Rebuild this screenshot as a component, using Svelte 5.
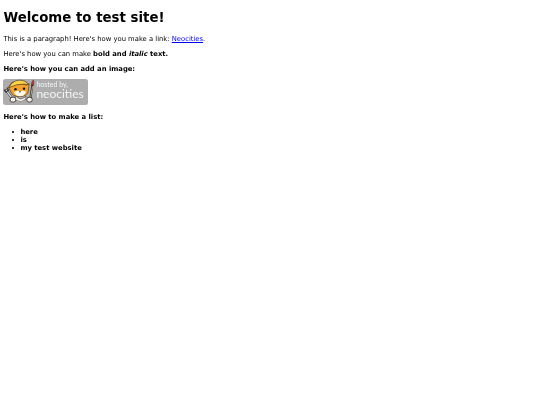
<script>
	const items = ['here', 'is', 'my test website'];
</script>

<main class="page">
	<h1>Welcome to test site!</h1>

	<p>This is a paragraph! Here's how you make a link: <a href="https://neocities.org">Neocities</a>.</p>

	<p>Here's how you can make <strong>bold and <em>italic</em> text.</strong></p>

	<p><strong>Here's how you can add an image:</strong></p>

	<p>
		<span class="badge">
			<svg class="mascot" viewBox="0 0 32 25" aria-hidden="true">
				<!-- wrench -->
				<path d="M3 11 L9 19" stroke="#333" stroke-width="2.4" stroke-linecap="round" />
				<path d="M3 11 L9 19" stroke="#e8e8e8" stroke-width="1.2" stroke-linecap="round" />
				<path d="M1 10.5 L3 13 L5.5 11 L4 8.5" fill="none" stroke="#333" stroke-width="1.1" />
				<!-- paw -->
				<ellipse cx="10" cy="20.5" rx="3" ry="2.6" fill="#f5f1e6" stroke="#222" stroke-width="0.8" />
				<!-- body -->
				<path d="M12 16 Q17 23 23 17 L22 21 Q17 24 13 21 Z" fill="#f5f1e6" stroke="#333" stroke-width="0.5" />
				<!-- head -->
				<path d="M5.5 8 L9 3 L13 5 Q19 3 23 6 L26 4.5 L25.5 11 Q25 17 17 17.5 Q9 17.5 7.5 12 Z" fill="#f4a32e" stroke="#3a2a14" stroke-width="0.6" stroke-linejoin="round" />
				<!-- hard hat -->
				<path d="M6 8.5 Q9 1.5 16 1 Q23 1 25.5 5.5 L21 5 Q14 4.5 6 8.5 Z" fill="#fcd24c" stroke="#3a2a14" stroke-width="0.6" stroke-linejoin="round" />
				<!-- muzzle and face -->
				<path d="M11 13 Q15 10.5 17 12.5 Q19 10.5 23 12.5 Q21.5 17 17 17 Q12.5 17 11 13 Z" fill="#fff8e8" />
				<circle cx="12.5" cy="10" r="1.2" fill="#111" />
				<circle cx="21" cy="9.5" r="1.2" fill="#111" />
				<path d="M15.8 12.4 H18 L16.9 13.6 Z" fill="#111" />
				<!-- paintbrush -->
				<path d="M29.5 5 L27.5 19" stroke="#222" stroke-width="2" stroke-linecap="round" />
				<path d="M29.5 7 L27.5 19" stroke="#d9b98a" stroke-width="0.9" />
				<path d="M28.3 5.5 Q29 1 30.5 0.8 Q31.4 3 30.6 5.8 Z" fill="#c8352c" stroke="#333" stroke-width="0.4" />
				<!-- other paw -->
				<ellipse cx="26.5" cy="20.5" rx="2.8" ry="2.5" fill="#f5f1e6" stroke="#222" stroke-width="0.8" />
			</svg>
			<span class="badge-text">
				<span class="hosted">hosted by,</span>
				<span class="brand">neocities</span>
			</span>
		</span>
	</p>

	<p><strong>Here's how to make a list:</strong></p>

	<ul>
		{#each items as item}
			<li><strong>{item}</strong></li>
		{/each}
	</ul>
</main>

<style>
	:global(body) {
		margin: 0;
		background: #fff;
	}

	.page {
		padding: 2px 3.4px 0;
		font-family: 'DejaVu Sans', sans-serif;
		font-size: 6.8px;
		color: #000;
		filter: blur(0.3px);
	}

	h1 {
		font-size: 13.35px;
		font-weight: bold;
		margin: 0 0 10px;
		padding-top: 8px;
	}

	p {
		margin: 6.75px 0;
	}

	a {
		color: #00e;
	}

	ul {
		margin: 6px 0;
		padding-left: 17px;
		list-style: none;
	}

	li::before {
		content: '';
		display: inline-block;
		width: 1.8px;
		height: 1.8px;
		margin-left: -8.5px;
		margin-right: 6.7px;
		border-radius: 50%;
		background: #000;
		vertical-align: 1.4px;
	}

	.badge {
		display: inline-flex;
		width: 84.5px;
		height: 25.3px;
		background: #adadad;
		border-radius: 2.5px;
		vertical-align: baseline;
		align-items: center;
	}

	.mascot {
		width: 32px;
		height: 25.3px;
		flex: none;
	}

	.badge-text {
		display: flex;
		flex-direction: column;
		margin: 0 0 2px 1px;
		font-family: Lato, sans-serif;
		color: #f4f4f4;
		line-height: 1;
	}

	.hosted {
		font-size: 7px;
	}

	.brand {
		font-size: 12px;
	}
</style>
